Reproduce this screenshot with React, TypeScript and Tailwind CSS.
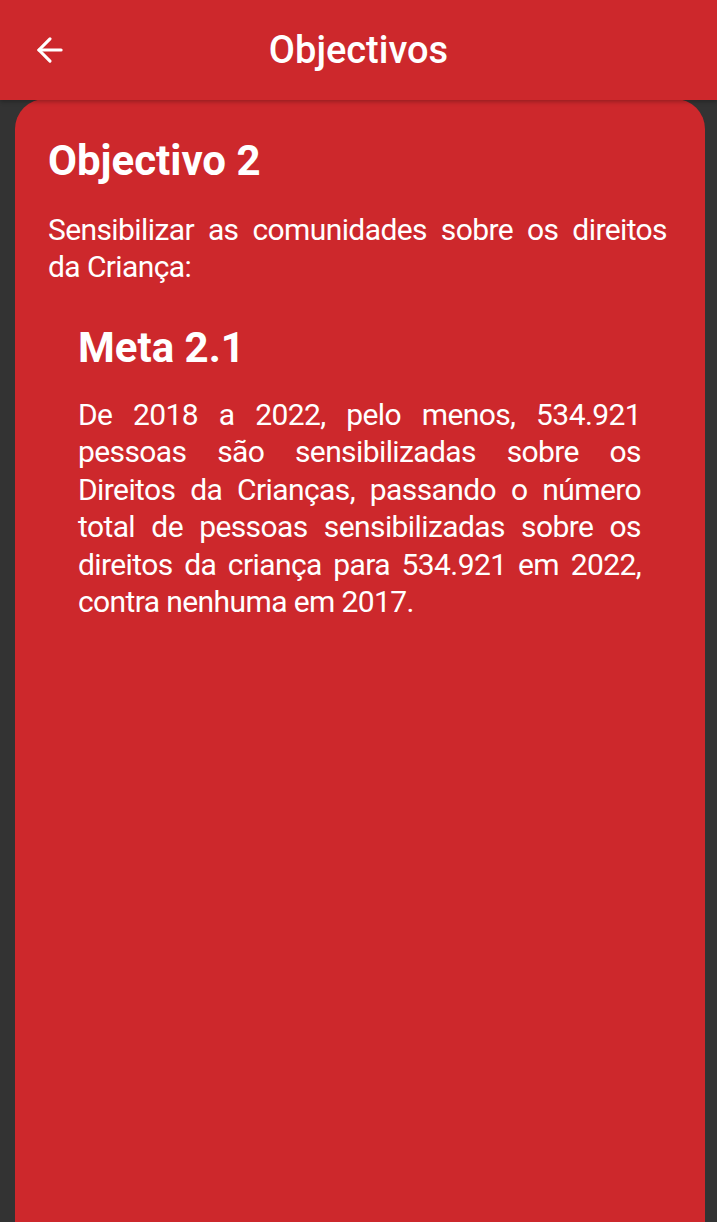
import { ArrowLeft } from "lucide-react";

export default function App() {
  return (
    <div
      className="h-[1222px] w-full flex flex-col bg-[#333333] overflow-hidden"
      style={{ fontFamily: "Roboto, 'Noto Sans', sans-serif" }}
    >
      {/* Top app bar */}
      <header className="relative z-10 h-[100px] shrink-0 bg-[#cd282c] flex items-center shadow-[0_2px_4px_rgba(0,0,0,0.25)]">
        <button className="ml-[31px] text-white">
          <ArrowLeft size={38} strokeWidth={2} />
        </button>
        <h1 className="absolute left-0 right-0 text-center text-white text-[38px] font-medium pointer-events-none">
          Objectivos
        </h1>
      </header>

      <main className="flex-1 pl-[15px] pr-[12px] -mt-px">
        <div className="h-full bg-[#cd282c] rounded-t-[30px] pt-[38px] pl-[33px] pr-[38px] text-white">
          <h2 className="text-[42px] font-bold leading-[48px]">Objectivo 2</h2>
          <p className="mt-[26px] text-[30px] tracking-[-0.6px] leading-[37px] text-justify">
            Sensibilizar as comunidades sobre os direitos da Criança:
          </p>

          <div className="mt-[39px] pl-[30px] pr-[26px]">
            <h3 className="text-[42px] font-bold leading-[48px]">Meta 2.1</h3>
            <p className="mt-[24px] text-[30px] tracking-[-0.6px] leading-[37.4px] text-justify">
              De 2018 a 2022, pelo menos, 534.921 pessoas são sensibilizadas sobre os
              Direitos da Crianças, passando o número total de pessoas sensibilizadas
              sobre os direitos da criança para 534.921 em 2022, contra nenhuma em 2017.
            </p>
          </div>
        </div>
      </main>
    </div>
  );
}
